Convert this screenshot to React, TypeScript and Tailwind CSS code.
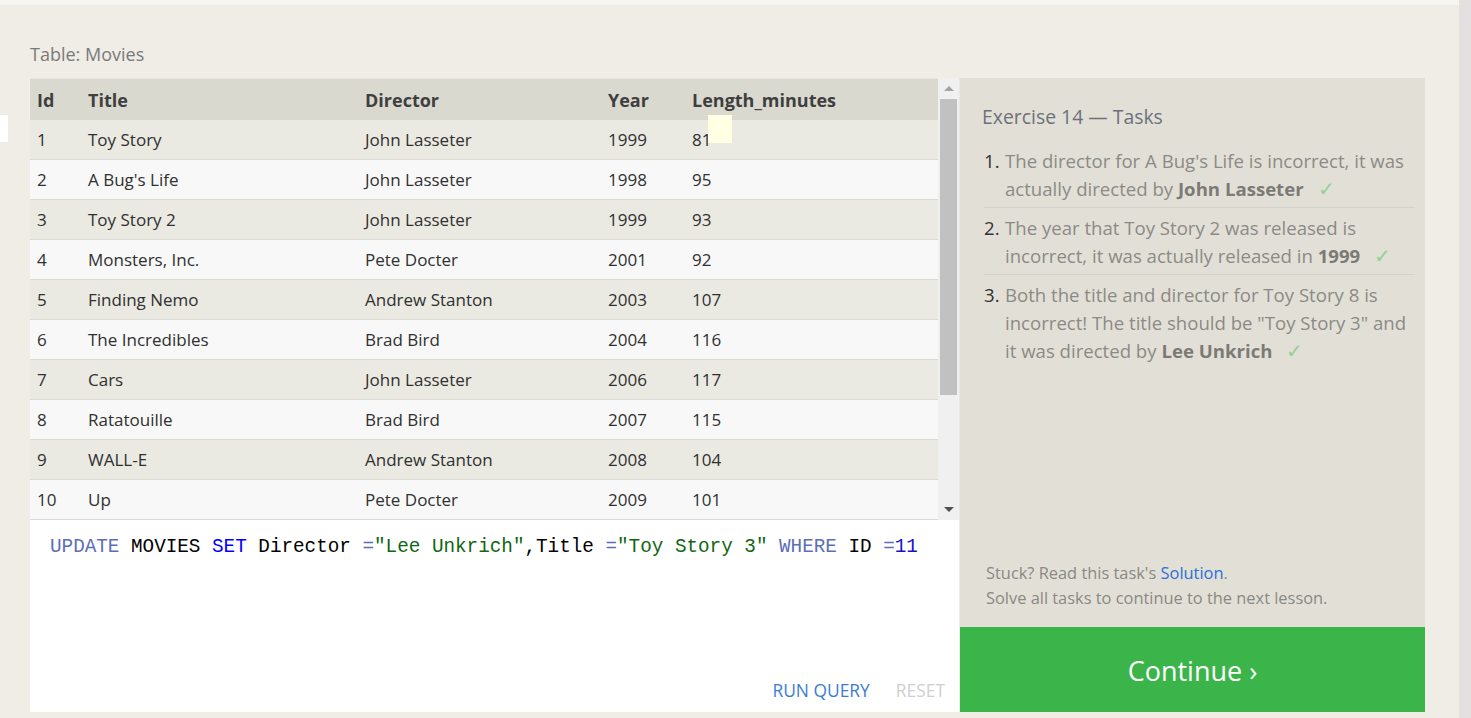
import React from 'react';

const movies = [
  { id: 1, title: 'Toy Story', director: 'John Lasseter', year: 1999, length: 81 },
  { id: 2, title: "A Bug's Life", director: 'John Lasseter', year: 1998, length: 95 },
  { id: 3, title: 'Toy Story 2', director: 'John Lasseter', year: 1999, length: 93 },
  { id: 4, title: 'Monsters, Inc.', director: 'Pete Docter', year: 2001, length: 92 },
  { id: 5, title: 'Finding Nemo', director: 'Andrew Stanton', year: 2003, length: 107 },
  { id: 6, title: 'The Incredibles', director: 'Brad Bird', year: 2004, length: 116 },
  { id: 7, title: 'Cars', director: 'John Lasseter', year: 2006, length: 117 },
  { id: 8, title: 'Ratatouille', director: 'Brad Bird', year: 2007, length: 115 },
  { id: 9, title: 'WALL-E', director: 'Andrew Stanton', year: 2008, length: 104 },
  { id: 10, title: 'Up', director: 'Pete Docter', year: 2009, length: 101 },
];

const cols = 'grid grid-cols-[50px_277px_243px_84px_1fr]';

function Check() {
  return <span className="ml-[14px] inline-block text-[20px] leading-[20px] font-light text-[#93d293]">✓</span>;
}

export default function App() {
  return (
    <div
      className="relative flex h-[718px] w-[1471px] overflow-hidden bg-[#efede5]"
      style={{ fontFamily: '"Open Sans", "Noto Sans", sans-serif' }}
    >
      <div className="flex w-[1459px] flex-col">
        <div className="h-[5px] bg-[#f6f5f1]" />
        <div className="pl-[30px] pt-[39px]">
          <div className="h-[20px] text-[18px] leading-[20px] text-[#7a7a7a]">Table: Movies</div>

          <div className="mt-[14px] flex">
            {/* left: table + editor */}
            <div className="flex w-[930px] flex-col">
              <div className="flex h-[442px] overflow-hidden bg-[#e9e8e0]">
                <div className="w-[908px]">
                  <div className={`${cols} h-[42px] items-center border-t border-[#e6e5df] bg-[#dad9cf] pt-[2px] text-[18px] font-bold text-[#3f3f3f]`}>
                    <div className="pl-[7px]">Id</div>
                    <div className="pl-[8px]">Title</div>
                    <div className="pl-[8px]">Director</div>
                    <div className="pl-[8px]">Year</div>
                    <div className="pl-[8px]">Length_minutes</div>
                  </div>
                  {movies.map((m, i) => (
                    <div
                      key={m.id}
                      className={`${cols} h-[40px] items-center border-b border-[#dcdbd5] pt-[1px] text-[17px] text-[#303030] ${
                        i % 2 === 0 ? 'bg-[#eae9e2]' : 'bg-[#f8f8f8]'
                      }`}
                    >
                      <div className="pl-[7px]">{m.id}</div>
                      <div className="pl-[8px]">{m.title}</div>
                      <div className="pl-[8px]">{m.director}</div>
                      <div className="pl-[8px]">{m.year}</div>
                      <div className="pl-[8px]">{m.length}</div>
                    </div>
                  ))}
                </div>
                {/* scrollbar */}
                <div className="flex w-[21px] flex-col items-center bg-[#f0f0f0]">
                  <div className="flex h-[21px] w-full items-center justify-center">
                    <div className="h-0 w-0 border-x-[5px] border-b-[5px] border-x-transparent border-b-[#a3a3a3]" />
                  </div>
                  <div className="h-[296px] w-[17px] bg-[#c1c1c1]" />
                  <div className="flex-1" />
                  <div className="flex h-[21px] w-full items-center justify-center">
                    <div className="h-0 w-0 border-x-[5px] border-t-[5px] border-x-transparent border-t-[#505050]" />
                  </div>
                </div>
              </div>

              {/* editor */}
              <div className="flex h-[192px] w-[929px] flex-col bg-white">
                <div
                  className="whitespace-pre pl-[20px] pt-[15px] text-[19.3px] leading-[24px] text-black"
                  style={{ fontFamily: '"Liberation Mono", "DejaVu Sans Mono", monospace' }}
                >
                  <span className="text-[#5a6fb5]">UPDATE</span> MOVIES <span className="text-[#0000ff]">SET</span> Director{' '}
                  <span className="text-[#5a6fb5]">=</span>
                  <span className="text-[#116611]">"Lee Unkrich"</span>,Title{' '}
                  <span className="text-[#5a6fb5]">=</span>
                  <span className="text-[#116611]">"Toy Story 3"</span>{' '}
                  <span className="text-[#5a6fb5]">WHERE</span> ID <span className="text-[#5a6fb5]">=</span>
                  <span className="text-[#1111cc]">11</span>
                </div>
                <div className="mt-auto flex justify-end gap-[26px] pb-[10px] pr-[14px] text-[17.4px] leading-[24px]">
                  <span className="text-[#3a7bd5]">RUN QUERY</span>
                  <span className="text-[#cfcfcf]">RESET</span>
                </div>
              </div>
            </div>

            {/* right: tasks */}
            <div className="flex w-[465px] flex-col">
              <div className="flex h-[549px] flex-col bg-[#e2e0d6] pl-[22px] pr-[10px]">
                <div className="pt-[26px] text-[19.4px] leading-[26px] text-[#6d717c]">Exercise 14 — Tasks</div>
                <ol className="mt-[17px] text-[18.6px] leading-[28px] text-[#8c8a86]">
                  <li className="ml-[2px] flex border-b border-[#d3d1c8] pb-[4px]">
                    <span className="w-[21px] shrink-0 text-[#333]">1.</span>
                    <span>
                      The director for A Bug's Life is incorrect, it was actually directed by{' '}
                      <b className="text-[#7c7a76]">John Lasseter</b>
                      <Check />
                    </span>
                  </li>
                  <li className="ml-[2px] flex border-b border-[#d3d1c8] pb-[4px] pt-[6px]">
                    <span className="w-[21px] shrink-0 text-[#333]">2.</span>
                    <span>
                      The year that Toy Story 2 was released is incorrect, it was actually released in{' '}
                      <b className="text-[#7c7a76]">1999</b>
                      <Check />
                    </span>
                  </li>
                  <li className="ml-[2px] flex pt-[6px]">
                    <span className="w-[21px] shrink-0 text-[#333]">3.</span>
                    <span>
                      Both the title and director for Toy Story 8 is incorrect! The title should be "Toy Story 3" and it
                      was directed by <b className="text-[#7c7a76]">Lee Unkrich</b>
                      <Check />
                    </span>
                  </li>
                </ol>
                <div className="mt-auto pb-[17px] pl-[4px] text-[16.4px] leading-[25px] text-[#8a8884]">
                  <div>
                    Stuck? Read this task's <span className="text-[#2b6fd6]">Solution</span>.
                  </div>
                  <div>Solve all tasks to continue to the next lesson.</div>
                </div>
              </div>
              <div className="flex h-[85px] items-center justify-center bg-[#3bb54a] pt-[4px] text-[27px] text-white">
                Continue ›
              </div>
            </div>
          </div>
        </div>
      </div>
      <div className="w-[12px] bg-[#e3e1e0]" />

      {/* overlays */}
      <div className="absolute left-0 top-[115px] h-[27px] w-[8px] bg-white" />
      <div className="absolute left-[708px] top-[115px] h-[28px] w-[24px] bg-[#ffffe3]" />
    </div>
  );
}
